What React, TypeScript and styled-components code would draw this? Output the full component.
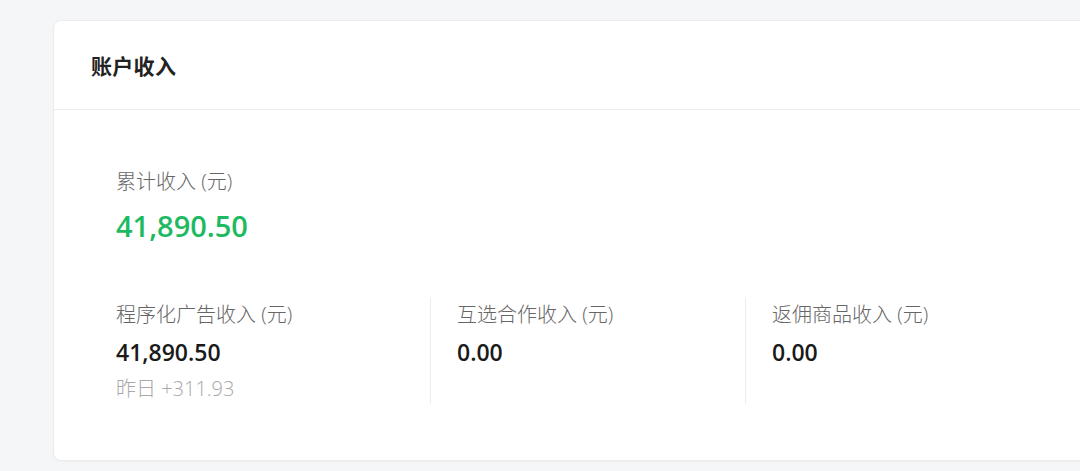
import React from "react";
import styled, { createGlobalStyle } from "styled-components";

const GlobalStyle = createGlobalStyle`
  html, body {
    margin: 0;
    padding: 0;
    background: #f5f6f8;
    overflow: hidden;
  }
  body {
    font-family: "Open Sans", "Noto Sans CJK SC", sans-serif;
  }
`;

const Page = styled.div`
  width: 1080px;
  height: 471px;
  padding: 20px 0 0 53px;
  box-sizing: border-box;
  overflow: hidden;
`;

const Card = styled.section`
  width: 1100px;
  height: 441px;
  box-sizing: border-box;
  background: #ffffff;
  border: 1px solid #ececee;
  border-radius: 8px;
  box-shadow: 0 1px 3px rgba(0, 0, 0, 0.03);
`;

const Header = styled.header`
  height: 89px;
  display: flex;
  align-items: center;
  padding-left: 37px;
  border-bottom: 1px solid #ededed;
  box-sizing: border-box;
`;

const Title = styled.h2`
  margin: 0;
  font-family: "Noto Sans CJK SC", sans-serif;
  font-size: 21px;
  font-weight: 700;
  color: #222;
  letter-spacing: 0.3px;
`;

const Body = styled.div`
  padding: 58px 0 0 62px;
`;

const Label = styled.div`
  font-size: 20px;
  line-height: 28px;
  color: #666;
  font-weight: 300;
`;

const Total = styled.div`
  margin-top: 10px;
  font-size: 29px;
  line-height: 40px;
  font-weight: 600;
  color: #1dba62;
`;

const Columns = styled.div`
  display: grid;
  grid-template-columns: 314px 315px 315px;
  margin-top: 51px;
`;

const Column = styled.div<{ $first?: boolean }>`
  padding: 4px 0 1px ${(p) => (p.$first ? "0" : "26px")};
  border-left: ${(p) => (p.$first ? "none" : "1px solid #ededed")};
  height: 107px;
  box-sizing: border-box;
`;

const Value = styled.div`
  margin-top: 7px;
  font-size: 23px;
  line-height: 32px;
  font-weight: 600;
  color: #1a1a1a;
`;

const Yesterday = styled.div`
  margin-top: 7px;
  font-size: 20px;
  line-height: 28px;
  font-weight: 300;
  color: #a8a8a8;
`;

const items = [
  { label: "程序化广告收入 (元)", value: "41,890.50", yesterday: "昨日 +311.93" },
  { label: "互选合作收入 (元)", value: "0.00" },
  { label: "返佣商品收入 (元)", value: "0.00" },
];

export default function App() {
  return (
    <>
      <GlobalStyle />
      <Page>
        <Card>
          <Header>
            <Title>账户收入</Title>
          </Header>
          <Body>
            <Label>累计收入 (元)</Label>
            <Total>41,890.50</Total>
            <Columns>
              {items.map((it, i) => (
                <Column key={it.label} $first={i === 0}>
                  <Label>{it.label}</Label>
                  <Value>{it.value}</Value>
                  {it.yesterday && <Yesterday>{it.yesterday}</Yesterday>}
                </Column>
              ))}
            </Columns>
          </Body>
        </Card>
      </Page>
    </>
  );
}
